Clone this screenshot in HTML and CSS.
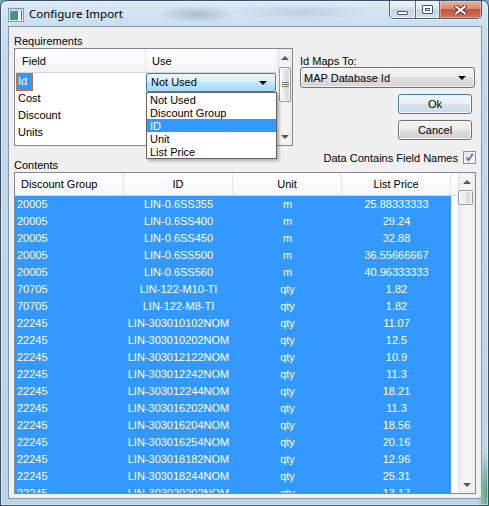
FILE: index.html
```html
<!DOCTYPE html>
<html>
<head>
<meta charset="utf-8">
<title>Configure Import</title>
<link rel="stylesheet" href="styles.css">
</head>
<body>
<div class="window">
  <div class="titlebar">
    <svg class="app-icon" width="16" height="14" viewBox="0 0 16 14">
      <defs>
        <linearGradient id="ig" x1="0" y1="0" x2="0.6" y2="1">
          <stop offset="0" stop-color="#6b9cc8"/>
          <stop offset="0.5" stop-color="#3d8fa0"/>
          <stop offset="1" stop-color="#3a9f62"/>
        </linearGradient>
      </defs>
      <rect x="0.5" y="0.5" width="15" height="13" fill="#eef2f6" stroke="#8a98a6"/>
      <rect x="1" y="1" width="14" height="2" fill="#c9d6e2"/>
      <rect x="2" y="3" width="8" height="9" fill="url(#ig)"/>
      <rect x="11" y="3" width="3" height="9" fill="#fbfcfd"/>
      <rect x="13" y="3" width="1" height="9" fill="#55636f"/>
    </svg>
    <span class="title">Configure Import</span>
    <div class="caption">
      <div class="cbtn min"><span class="g-min"></span></div>
      <div class="cbtn max"><span class="g-max"></span></div>
      <div class="cbtn close">
        <svg width="13" height="10" viewBox="0 0 13 10">
          <path d="M2 1.5 L11 8.5 M11 1.5 L2 8.5" stroke="#5a2318" stroke-width="4" stroke-linecap="square"/>
          <path d="M2 1.5 L11 8.5 M11 1.5 L2 8.5" stroke="#ffffff" stroke-width="2.2" stroke-linecap="square"/>
        </svg>
      </div>
    </div>
  </div>

  <div class="client">
    <div class="upper">
      <div class="req">
        <div class="label">Requirements</div>
        <div class="reqbox">
          <div class="rgrid">
            <div class="rhead">
              <div class="rh rh-field">Field</div>
              <div class="rh rh-use">Use</div>
            </div>
            <div class="rrow">
              <div class="rf"><span class="idsel">Id</span></div>
              <div class="ru"><div class="combo-edit"><span>Not Used</span><span class="arrow-down"></span></div></div>
            </div>
            <div class="rrow"><div class="rf">Cost</div><div class="ru"></div></div>
            <div class="rrow"><div class="rf">Discount</div><div class="ru"></div></div>
            <div class="rrow"><div class="rf">Units</div><div class="ru"></div></div>
          </div>
          <div class="vscroll rscroll">
            <div class="sbtn sb-up-small"><span class="tri-up"></span></div>
            <div class="thumb rthumb"><span class="grip"></span></div>
            <div class="track"></div>
            <div class="sbtn sb-down-small"><span class="tri-down"></span></div>
          </div>
          <ul class="droplist">
            <li>Not Used</li>
            <li>Discount Group</li>
            <li class="hl">ID</li>
            <li>Unit</li>
            <li>List Price</li>
          </ul>
        </div>
      </div>

      <div class="side">
        <div class="label side-label">Id Maps To:</div>
        <div class="combo"><span>MAP Database Id</span><span class="arrow-down"></span></div>
        <div class="btn btn-default">Ok</div>
        <div class="btn">Cancel</div>
      </div>
    </div>

    <div class="midrow">
      <div class="label contents-label">Contents</div>
      <div class="chkrow">
        <span>Data Contains Field Names</span>
        <span class="chk">
          <svg width="11" height="11" viewBox="0 0 11 11"><path d="M2.5 5.5 L4.5 8.2 L8.8 1.8" fill="none" stroke="#5a70a8" stroke-width="1.8"/></svg>
        </span>
      </div>
    </div>

    <div class="table">
      <div class="tmain">
        <div class="thead">
          <div class="th th-first">Discount Group</div>
          <div class="th">ID</div>
          <div class="th">Unit</div>
          <div class="th">List Price</div>
          <div class="th th-fill"></div>
        </div>
        <div class="tbody">
          <div class="trow"><span class="c1">20005</span><span>LIN-0.6SS355</span><span>m</span><span>25.88333333</span></div>
          <div class="trow"><span class="c1">20005</span><span>LIN-0.6SS400</span><span>m</span><span>29.24</span></div>
          <div class="trow"><span class="c1">20005</span><span>LIN-0.6SS450</span><span>m</span><span>32.88</span></div>
          <div class="trow"><span class="c1">20005</span><span>LIN-0.6SS500</span><span>m</span><span>36.55666667</span></div>
          <div class="trow"><span class="c1">20005</span><span>LIN-0.6SS560</span><span>m</span><span>40.96333333</span></div>
          <div class="trow"><span class="c1">70705</span><span>LIN-122-M10-TI</span><span>qty</span><span>1.82</span></div>
          <div class="trow"><span class="c1">70705</span><span>LIN-122-M8-TI</span><span>qty</span><span>1.82</span></div>
          <div class="trow"><span class="c1">22245</span><span>LIN-303010102NOM</span><span>qty</span><span>11.07</span></div>
          <div class="trow"><span class="c1">22245</span><span>LIN-303010202NOM</span><span>qty</span><span>12.5</span></div>
          <div class="trow"><span class="c1">22245</span><span>LIN-303012122NOM</span><span>qty</span><span>10.9</span></div>
          <div class="trow"><span class="c1">22245</span><span>LIN-303012242NOM</span><span>qty</span><span>11.3</span></div>
          <div class="trow"><span class="c1">22245</span><span>LIN-303012244NOM</span><span>qty</span><span>18.21</span></div>
          <div class="trow"><span class="c1">22245</span><span>LIN-303016202NOM</span><span>qty</span><span>11.3</span></div>
          <div class="trow"><span class="c1">22245</span><span>LIN-303016204NOM</span><span>qty</span><span>18.56</span></div>
          <div class="trow"><span class="c1">22245</span><span>LIN-303016254NOM</span><span>qty</span><span>20.16</span></div>
          <div class="trow"><span class="c1">22245</span><span>LIN-303018182NOM</span><span>qty</span><span>12.96</span></div>
          <div class="trow"><span class="c1">22245</span><span>LIN-303018244NOM</span><span>qty</span><span>25.31</span></div>
          <div class="trow"><span class="c1">22245</span><span>LIN-303020202NOM</span><span>qty</span><span>13.17</span></div>
        </div>
      </div>
      <div class="vscroll tscroll">
        <div class="sbtn"><span class="tri-up"></span></div>
        <div class="thumb tthumb"></div>
        <div class="track"></div>
        <div class="sbtn"><span class="tri-down"></span></div>
      </div>
    </div>
  </div>
</div>
</body>
</html>
```

FILE: styles.css
```css
* { box-sizing: border-box; }

html, body {
  margin: 0;
  padding: 0;
}

body {
  width: 489px;
  height: 506px;
  overflow: hidden;
  background: #7c9cbb;
  font-family: "Liberation Sans", Arial, sans-serif;
  font-size: 11px;
  color: #000;
}

.window {
  width: 489px;
  height: 506px;
  border: 1px solid #3e5064;
  border-radius: 7px 7px 0 0;
  display: flex;
  flex-direction: column;
  background:
    radial-gradient(ellipse 38px 9px at 196px 13px, rgba(95, 118, 142, 0.35), rgba(95, 118, 142, 0) 100%),
    radial-gradient(ellipse 70px 8px at 300px 11px, rgba(110, 130, 155, 0.22), rgba(110, 130, 155, 0) 100%),
    radial-gradient(ellipse 10px 40px at 486px 490px, rgba(40, 140, 70, 0.7), rgba(40, 140, 70, 0) 100%),
    linear-gradient(180deg, #dbe9f5 0px, #cde0f0 20px, #c2d8ec 60px, #bcd3e8 100%);
  box-shadow: inset 0 0 0 1px rgba(255, 255, 255, 0.45);
}

/* ---------- title bar ---------- */
.titlebar {
  height: 25px;
  display: flex;
  align-items: flex-start;
  flex: none;
}

.app-icon {
  margin: 7px 0 0 7px;
  flex: none;
}

.title {
  margin: 5px 0 0 5px;
  font-family: "Noto Sans", "Open Sans", sans-serif;
  font-size: 11.5px;
  line-height: 16px;
  color: #000;
}

.caption {
  margin-left: auto;
  margin-right: 6px;
  display: flex;
  height: 18px;
  border: 1px solid #4c5a6a;
  border-top: 0;
  border-radius: 0 0 5px 5px;
  overflow: hidden;
  box-shadow: 0 1px 0 rgba(255, 255, 255, 0.55);
}

.cbtn {
  height: 100%;
  display: flex;
  align-items: center;
  justify-content: center;
}

.cbtn.min,
.cbtn.max {
  background: linear-gradient(180deg, #eef4f9 0%, #dce7f1 45%, #c4d5e5 50%, #d3e1ee 100%);
  border-right: 1px solid #5f6e7e;
  box-shadow: inset 0 0 0 1px rgba(255, 255, 255, 0.5);
}

.cbtn.min { width: 26px; }
.cbtn.max { width: 24px; }

.cbtn.close {
  width: 41px;
  background: linear-gradient(180deg, #eab0a2 0%, #dc8a75 45%, #c8533b 50%, #d2745b 100%);
  box-shadow: inset 0 0 0 1px rgba(255, 220, 210, 0.45);
}

.g-min {
  width: 11px;
  height: 4px;
  margin-top: 6px;
  background: #fff;
  border: 1px solid #48586a;
  border-radius: 1px;
}

.g-max {
  width: 11px;
  height: 9px;
  border: 1px solid #48586a;
  background: #fff;
  box-shadow: inset 0 0 0 2px #fff, inset 0 0 0 3px #48586a;
  border-radius: 1px;
}

/* ---------- client ---------- */
.client {
  margin: 0 6px 6px 7px;
  height: 473px;
  border: 1px solid #8497ab;
  background: #f0f0f0;
  padding: 8px 0 0 5px;
  display: flex;
  flex-direction: column;
}

.label {
  line-height: 13px;
  height: 13px;
  white-space: nowrap;
}

.upper {
  display: flex;
  height: 111px;
}

.req {
  width: 279px;
  display: flex;
  flex-direction: column;
}

.reqbox {
  position: relative;
  width: 279px;
  height: 98px;
  border: 1px solid #828790;
  background: #fff;
  display: flex;
}

.rgrid {
  width: 262px;
  display: flex;
  flex-direction: column;
}

.rhead {
  display: flex;
  height: 24px;
  border-bottom: 1px solid #d5d5d5;
  background: linear-gradient(180deg, #ffffff 0%, #f7f8f9 60%, #f1f2f4 100%);
}

.rh {
  padding-top: 2px;
  line-height: 21px;
}

.rh-field {
  width: 131px;
  padding-left: 7px;
  border-right: 1px solid #e2e4e7;
}

.rh-use {
  width: 131px;
  padding-left: 6px;
}

.rrow {
  display: flex;
  height: 17px;
  line-height: 17px;
  flex: none;
}

.rf {
  width: 131px;
  padding-left: 3px;
}

.ru {
  width: 131px;
}

.idsel {
  display: inline-block;
  margin-left: -2px;
  width: 17px;
  height: 18px;
  padding-left: 2px;
  background: #3399ff;
  color: #fff;
  outline: 1px dotted #c9733a;
  outline-offset: -1px;
}

.combo-edit {
  height: 19px;
  width: 130px;
  border: 1px solid #3c7fb1;
  border-radius: 2px;
  background: linear-gradient(180deg, #eaf6fd 0%, #d9f0fc 50%, #bee6fd 50%, #a7d9f5 100%);
  display: flex;
  align-items: center;
  justify-content: space-between;
  padding: 0 8px 0 4px;
  line-height: 17px;
  position: relative;
  z-index: 1;
}

.arrow-down {
  width: 0;
  height: 0;
  border-left: 4px solid transparent;
  border-right: 4px solid transparent;
  border-top: 4px solid #000;
}

.droplist {
  position: absolute;
  left: 131px;
  top: 43px;
  width: 131px;
  height: 67px;
  margin: 0;
  padding: 0;
  list-style: none;
  border: 1px solid #646464;
  background: #fff;
  box-shadow: 2px 2px 3px rgba(0, 0, 0, 0.28);
  z-index: 2;
}

.droplist li {
  height: 13px;
  line-height: 14px;
  padding-left: 3px;
}

.droplist li.hl {
  background: #3399ff;
  color: #fff;
}

/* ---------- scrollbars ---------- */
.vscroll {
  display: flex;
  flex-direction: column;
  background: linear-gradient(90deg, #e6e6e6 0%, #f3f3f3 25%, #f3f3f3 75%, #e9e9e9 100%);
}

.rscroll { width: 15px; }
.tscroll { width: 17px; }

.sbtn {
  height: 17px;
  flex: none;
  display: flex;
  align-items: center;
  justify-content: center;
}

.sb-up-small { height: 18px; }
.sb-down-small { height: 17px; }

.tri-up {
  width: 0;
  height: 0;
  border-left: 4px solid transparent;
  border-right: 4px solid transparent;
  border-bottom: 4px solid #555;
}

.tri-down {
  width: 0;
  height: 0;
  border-left: 4px solid transparent;
  border-right: 4px solid transparent;
  border-top: 4px solid #555;
}

.thumb {
  flex: none;
  margin: 0 1px;
  border: 1px solid #9a9a9a;
  border-radius: 2px;
  background: linear-gradient(90deg, #f6f6f6 0%, #eaeaea 50%, #d9d9d9 51%, #e2e2e2 100%);
  box-shadow: inset 0 0 0 1px rgba(255, 255, 255, 0.8);
  display: flex;
  align-items: center;
  justify-content: center;
}

.rthumb { height: 35px; margin: 0 1px 0 2px; }
.tthumb { height: 15px; margin: 0 2px 0 0; }

.grip {
  width: 7px;
  height: 5px;
  border-top: 1px solid #7a7a7a;
  border-bottom: 1px solid #7a7a7a;
  background: linear-gradient(180deg, transparent 40%, #7a7a7a 40%, #7a7a7a 60%, transparent 60%);
}

.track { flex: 1; }

/* ---------- side column ---------- */
.side {
  width: 175px;
  margin-left: 7px;
  padding-top: 21px;
  display: flex;
  flex-direction: column;
}

.side-label {
  line-height: 11px;
  height: 11px;
}

.combo {
  height: 21px;
  width: 175px;
  border: 1px solid #707070;
  border-radius: 3px;
  background: linear-gradient(180deg, #f4f4f4 0%, #ededed 50%, #e0e0e0 50%, #d4d4d4 100%);
  box-shadow: inset 0 0 0 1px rgba(255, 255, 255, 0.75);
  display: flex;
  align-items: center;
  justify-content: space-between;
  padding: 0 8px 0 3px;
}

.btn {
  align-self: flex-end;
  margin-right: 3px;
  margin-top: 6px;
  width: 74px;
  height: 20px;
  border: 1px solid #707070;
  border-radius: 3px;
  background: linear-gradient(180deg, #f2f2f2 0%, #ebebeb 50%, #dddddd 50%, #cfcfcf 100%);
  box-shadow: inset 0 0 0 1px rgba(255, 255, 255, 0.75);
  text-align: center;
  line-height: 18px;
}

.btn-default {
  border-color: #3c7fb1;
  background: linear-gradient(180deg, #f1f6fa 0%, #e6eef5 50%, #d5e3ed 50%, #cadae6 100%);
  box-shadow: inset 0 0 0 1px rgba(255, 255, 255, 0.8);
}

/* ---------- middle row ---------- */
.midrow {
  width: 462px;
  height: 26px;
  display: flex;
  justify-content: space-between;
  align-items: flex-end;
  flex: none;
}

.chkrow {
  display: flex;
  align-items: center;
  height: 13px;
  margin-bottom: 8px;
  white-space: nowrap;
}

.chk {
  width: 13px;
  height: 13px;
  margin-left: 5px;
  border: 1px solid #8f8f8f;
  background: linear-gradient(135deg, #dcdfe8 0%, #eef0f6 55%, #ffffff 100%);
  box-shadow: inset 0 0 0 1px #f4f4f4;
  display: flex;
  align-items: center;
  justify-content: center;
}

.chk svg { display: block; }

/* ---------- table ---------- */
.table {
  width: 462px;
  height: 322px;
  border: 1px solid #828790;
  background: #fff;
  display: flex;
  flex: none;
}

.tmain {
  width: 443px;
  display: flex;
  flex-direction: column;
  overflow: hidden;
}

.thead {
  display: flex;
  height: 23px;
  flex: none;
  border-bottom: 1px solid #d5d5d5;
  background: linear-gradient(180deg, #ffffff 0%, #fbfbfc 50%, #f4f5f7 100%);
}

.th {
  width: 109px;
  flex: none;
  line-height: 22px;
  text-align: center;
  border-right: 1px solid #e3e5e8;
}

.th-first {
  text-align: left;
  padding-left: 6px;
}

.th-fill {
  width: 7px;
  border-right: 0;
}

.tbody {
  flex: 1;
  overflow: hidden;
}

.trow {
  display: grid;
  grid-template-columns: repeat(4, 109px);
  width: 436px;
  height: 17px;
  line-height: 17px;
  background: #3399ff;
  color: #fff;
  white-space: nowrap;
}

.trow span {
  text-align: center;
}

.trow .c1 {
  text-align: left;
  padding-left: 2px;
}
```
